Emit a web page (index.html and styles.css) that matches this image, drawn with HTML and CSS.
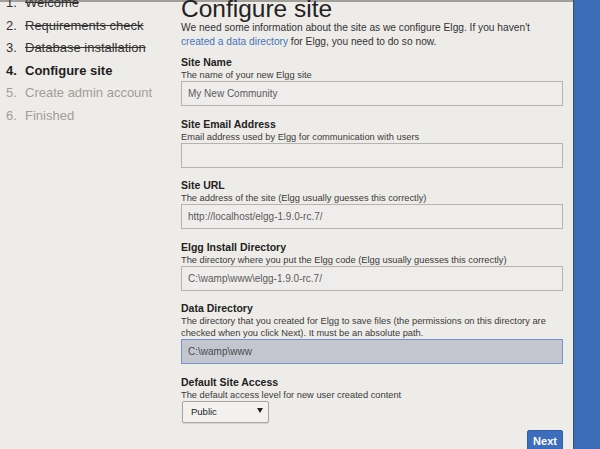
FILE: index.html
```html
<!DOCTYPE html>
<html>
<head>
<meta charset="utf-8">
<link rel="stylesheet" href="styles.css">
</head>
<body>
<div class="page">
  <aside class="steps">
    <ol class="step-list">
      <li class="step done"><span class="num">1.</span><span class="txt">Welcome</span></li>
      <li class="step done"><span class="num">2.</span><span class="txt">Requirements check</span></li>
      <li class="step done"><span class="num">3.</span><span class="txt">Database installation</span></li>
      <li class="step current"><span class="num">4.</span><span class="txt">Configure site</span></li>
      <li class="step todo"><span class="num">5.</span><span class="txt">Create admin account</span></li>
      <li class="step todo"><span class="num">6.</span><span class="txt">Finished</span></li>
    </ol>
  </aside>
  <main class="content">
    <h1 class="title">Configure site</h1>
    <p class="intro">We need some information about the site as we configure Elgg. If you haven't <a class="link" href="#">created a data directory</a> for Elgg, you need to do so now.</p>

    <div class="field">
      <div class="label">Site Name</div>
      <div class="help">The name of your new Elgg site</div>
      <div class="input">My New Community</div>
    </div>
    <div class="field">
      <div class="label">Site Email Address</div>
      <div class="help">Email address used by Elgg for communication with users</div>
      <div class="input"></div>
    </div>
    <div class="field">
      <div class="label">Site URL</div>
      <div class="help">The address of the site (Elgg usually guesses this correctly)</div>
      <div class="input">http://localhost/elgg-1.9.0-rc.7/</div>
    </div>
    <div class="field">
      <div class="label">Elgg Install Directory</div>
      <div class="help">The directory where you put the Elgg code (Elgg usually guesses this correctly)</div>
      <div class="input">C:\wamp\www\elgg-1.9.0-rc.7/</div>
    </div>
    <div class="field">
      <div class="label">Data Directory</div>
      <div class="help">The directory that you created for Elgg to save files (the permissions on this directory are checked when you click Next). It must be an absolute path.</div>
      <div class="input focused">C:\wamp\www</div>
    </div>
    <div class="field">
      <div class="label">Default Site Access</div>
      <div class="help">The default access level for new user created content</div>
      <div class="select"><span class="select-text">Public</span><svg class="caret" width="6" height="5" viewBox="0 0 6 5"><path d="M0 0 L6 0 L3 5 Z" fill="#222"/></svg></div>
    </div>
    <div class="actions">
      <div class="btn">Next</div>
    </div>
  </main>
  <div class="edge"></div>
</div>
</body>
</html>
```

FILE: styles.css
```css
html, body {
  margin: 0;
  padding: 0;
  height: 100%;
  overflow: hidden;
}
body {
  background: #eeece9;
  font-family: "Liberation Sans", Arial, sans-serif;
  color: #2b2b2b;
}
.page {
  display: flex;
  height: 449px;
  border-top: 2px solid #a39f9a;
  box-sizing: border-box;
}
.steps {
  width: 181px;
  flex: none;
}
.step-list {
  list-style: none;
  margin: -10px 0 0 0;
  padding: 0 0 0 6px;
}
.step {
  display: flex;
  font-size: 13px;
  line-height: 22.5px;
  color: #333;
}
.step .num {
  width: 19px;
  flex: none;
}
.step.done .txt {
  text-decoration: line-through;
}
.step.current {
  font-weight: bold;
  color: #1e1e1e;
}
.step.todo {
  color: #a09d9a;
}
.content {
  width: 382px;
  flex: none;
}
.title {
  margin: -5px 0 0 0;
  font-size: 24.5px;
  line-height: 24px;
  font-weight: normal;
  color: #222;
}
.intro {
  margin: 0;
  font-size: 10.2px;
  line-height: 14px;
  color: #333;
}
.link {
  color: #4675b9;
  text-decoration: none;
}
.field {
  margin-top: 7px;
}
.field + .field {
  margin-top: 11.5px;
}
.label {
  font-size: 10.5px;
  line-height: 13px;
  font-weight: bold;
  color: #222;
}
.help {
  font-size: 9.3px;
  line-height: 12px;
  color: #3a3a3a;
}
.input {
  height: 25px;
  box-sizing: border-box;
  border: 1px solid #b7b3ae;
  background: #efedeb;
  font-size: 10px;
  line-height: 23px;
  padding-left: 6px;
  color: #5a5a5a;
}
.input.focused {
  background: #c3c6ce;
  border-color: #7393cc;
  color: #4a4a4a;
}
.select {
  margin-left: 1px;
  width: 87px;
  height: 22px;
  box-sizing: border-box;
  border: 1px solid #a9a6a2;
  border-radius: 2px;
  background: #f3f1ef;
  box-shadow: 0 1px 1px rgba(0,0,0,0.12);
  display: flex;
  align-items: center;
  justify-content: space-between;
  padding: 0 5px 0 8px;
  font-size: 9.5px;
  color: #222;
}
.caret {
  display: block;
  margin-top: -2px;
}
.actions {
  display: flex;
  justify-content: flex-end;
  margin-top: 7px;
}
.btn {
  width: 36px;
  height: 24px;
  box-sizing: border-box;
  background: #3c6ebd;
  border: 1px solid #2f5da6;
  border-radius: 2px;
  color: #fff;
  font-weight: bold;
  font-size: 11px;
  line-height: 20px;
  text-align: center;
}
.edge {
  margin-left: 10px;
  flex: 1;
  background: #3b6db7;
  border-left: 1px solid #3c4f6b;
  margin-top: -2px;
}
```
